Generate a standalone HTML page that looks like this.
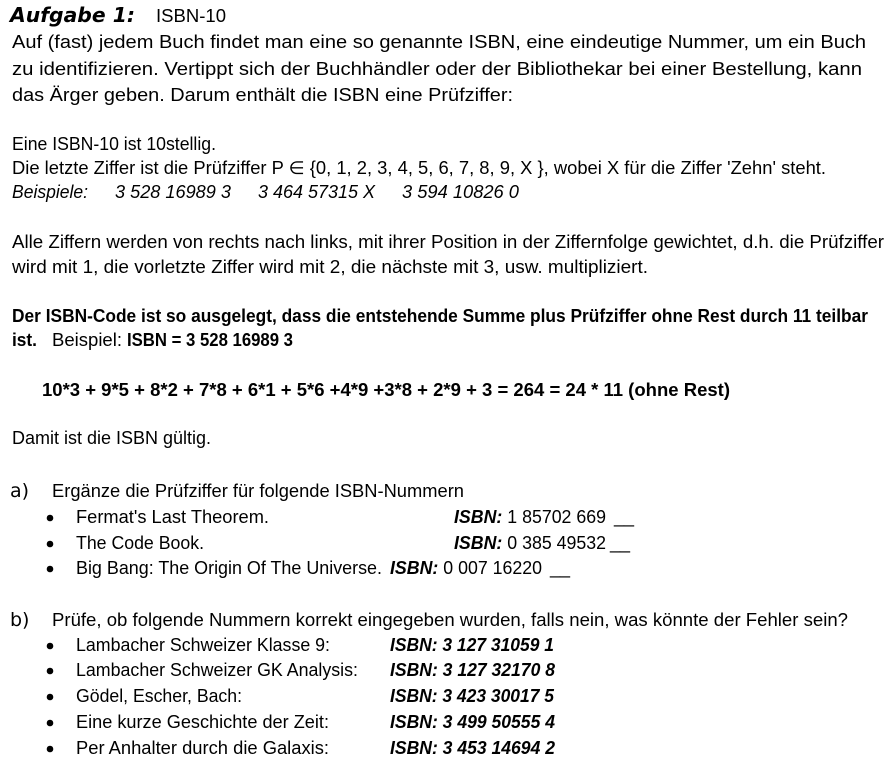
<!DOCTYPE html>
<html><head><meta charset="utf-8"><style>
html,body{margin:0;padding:0;background:#fff;width:895px;height:771px;overflow:hidden}
svg{display:block}
text{font-family:"Liberation Sans",sans-serif;font-size:18px;fill:#000}
.b{font-weight:bold}.i{font-style:italic}
</style></head><body>
<svg width="895" height="771" viewBox="0 0 895 771">
<text x="10" y="22" class="b i" style="font-family:'DejaVu Sans',sans-serif;font-size:20px" textLength="125" lengthAdjust="spacingAndGlyphs">Aufgabe 1:</text>
<text x="156" y="22" textLength="70" lengthAdjust="spacingAndGlyphs">ISBN-10</text>
<text x="12" y="48" textLength="854" lengthAdjust="spacingAndGlyphs">Auf (fast) jedem Buch findet man eine so genannte ISBN, eine eindeutige Nummer, um ein Buch</text>
<text x="12" y="75" textLength="850" lengthAdjust="spacingAndGlyphs">zu identifizieren. Vertippt sich der Buchhändler oder der Bibliothekar bei einer Bestellung, kann</text>
<text x="12" y="101" textLength="501" lengthAdjust="spacingAndGlyphs">das Ärger geben. Darum enthält die ISBN eine Prüfziffer:</text>
<text x="12" y="150" textLength="204" lengthAdjust="spacingAndGlyphs">Eine ISBN-10 ist 10stellig.</text>
<text x="12" y="174" textLength="814" lengthAdjust="spacingAndGlyphs">Die letzte Ziffer ist die Prüfziffer P ∈ {0, 1, 2, 3, 4, 5, 6, 7, 8, 9, X }, wobei X für die Ziffer 'Zehn' steht.</text>
<text x="12" y="198" class="i" textLength="76" lengthAdjust="spacingAndGlyphs">Beispiele:</text>
<text x="115" y="198" class="i" textLength="116" lengthAdjust="spacingAndGlyphs">3 528 16989 3</text>
<text x="258" y="198" class="i" textLength="117" lengthAdjust="spacingAndGlyphs">3 464 57315 X</text>
<text x="402" y="198" class="i" textLength="117" lengthAdjust="spacingAndGlyphs">3 594 10826 0</text>
<text x="12" y="248" textLength="872" lengthAdjust="spacingAndGlyphs">Alle Ziffern werden von rechts nach links, mit ihrer Position in der Ziffernfolge gewichtet, d.h. die Prüfziffer</text>
<text x="12" y="273" textLength="636" lengthAdjust="spacingAndGlyphs">wird mit 1, die vorletzte Ziffer wird mit 2, die nächste mit 3, usw. multipliziert.</text>
<text x="12" y="322" class="b" textLength="856" lengthAdjust="spacingAndGlyphs">Der ISBN-Code ist so ausgelegt, dass die entstehende Summe plus Prüfziffer ohne Rest durch 11 teilbar</text>
<text x="12" y="346" class="b" textLength="25" lengthAdjust="spacingAndGlyphs">ist.</text>
<text x="52" y="346" textLength="70" lengthAdjust="spacingAndGlyphs">Beispiel:</text>
<text x="127" y="346" class="b" textLength="166" lengthAdjust="spacingAndGlyphs">ISBN = 3 528 16989 3</text>
<text x="42" y="396" class="b" textLength="688" lengthAdjust="spacingAndGlyphs">10*3 + 9*5 + 8*2 + 7*8 + 6*1 + 5*6 +4*9 +3*8 + 2*9 + 3 = 264 = 24 * 11 (ohne Rest)</text>
<text x="12" y="444" textLength="199" lengthAdjust="spacingAndGlyphs">Damit ist die ISBN gültig.</text>
<text x="10" y="497" style="font-family:'DejaVu Sans',sans-serif;font-size:19px">a)</text>
<text x="52" y="497" textLength="412" lengthAdjust="spacingAndGlyphs">Ergänze die Prüfziffer für folgende ISBN-Nummern</text>
<g>
<circle cx="50" cy="518" r="3.3"/><circle cx="50" cy="544" r="3.3"/><circle cx="50" cy="569" r="3.3"/>
<text x="76" y="523" textLength="193" lengthAdjust="spacingAndGlyphs">Fermat's Last Theorem.</text>
<text x="76" y="549" textLength="128" lengthAdjust="spacingAndGlyphs">The Code Book.</text>
<text x="76" y="574" textLength="306" lengthAdjust="spacingAndGlyphs">Big Bang: The Origin Of The Universe.</text>
<text x="454" y="523" textLength="152" lengthAdjust="spacingAndGlyphs"><tspan class="b i">ISBN:</tspan> 1 85702 669</text>
<text x="614" y="523">__</text>
<text x="454" y="549" textLength="152" lengthAdjust="spacingAndGlyphs"><tspan class="b i">ISBN:</tspan> 0 385 49532</text>
<text x="610" y="549">__</text>
<text x="390" y="574" textLength="152" lengthAdjust="spacingAndGlyphs"><tspan class="b i">ISBN:</tspan> 0 007 16220</text>
<text x="550" y="574">__</text>
</g>
<text x="10" y="626" style="font-family:'DejaVu Sans',sans-serif;font-size:19px">b)</text>
<text x="52" y="626" textLength="796" lengthAdjust="spacingAndGlyphs">Prüfe, ob folgende Nummern korrekt eingegeben wurden, falls nein, was könnte der Fehler sein?</text>
<g>
<circle cx="50" cy="646" r="3.3"/><circle cx="50" cy="671" r="3.3"/><circle cx="50" cy="697" r="3.3"/><circle cx="50" cy="723" r="3.3"/><circle cx="50" cy="749" r="3.3"/>
<text x="76" y="651" textLength="254" lengthAdjust="spacingAndGlyphs">Lambacher Schweizer Klasse 9:</text>
<text x="76" y="676" textLength="282" lengthAdjust="spacingAndGlyphs">Lambacher Schweizer GK Analysis:</text>
<text x="76" y="702" textLength="166" lengthAdjust="spacingAndGlyphs">Gödel, Escher, Bach:</text>
<text x="76" y="728" textLength="253" lengthAdjust="spacingAndGlyphs">Eine kurze Geschichte der Zeit:</text>
<text x="76" y="754" textLength="253" lengthAdjust="spacingAndGlyphs">Per Anhalter durch die Galaxis:</text>
<text x="390" y="651" class="b i" textLength="164" lengthAdjust="spacingAndGlyphs">ISBN: 3 127 31059 1</text>
<text x="390" y="676" class="b i" textLength="165" lengthAdjust="spacingAndGlyphs">ISBN: 3 127 32170 8</text>
<text x="390" y="702" class="b i" textLength="164" lengthAdjust="spacingAndGlyphs">ISBN: 3 423 30017 5</text>
<text x="390" y="728" class="b i" textLength="165" lengthAdjust="spacingAndGlyphs">ISBN: 3 499 50555 4</text>
<text x="390" y="754" class="b i" textLength="165" lengthAdjust="spacingAndGlyphs">ISBN: 3 453 14694 2</text>
</g>
</svg>
</body></html>
